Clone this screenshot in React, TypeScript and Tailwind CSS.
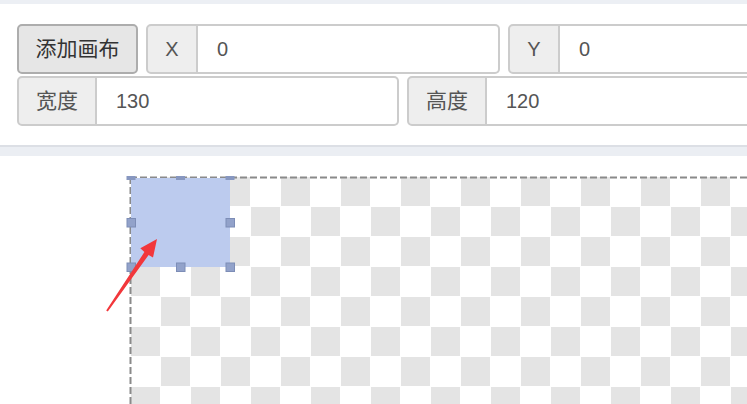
import React from "react";

const FONT = "font-['Liberation_Sans','Noto_Sans_CJK_SC',sans-serif]";

function InputGroup({ label, value, width, labelWidth, cjk }: { label: string; value: string; width: string; labelWidth: string; cjk?: boolean }) {
  return (
    <div className={`flex h-[50px] shrink-0 ${width}`}>
      <div
        className={`flex shrink-0 items-center justify-center rounded-l-[5px] border-2 border-[#cccccc] bg-[#eeeeee] text-[#555555] ${labelWidth} ${cjk ? "text-[21px]" : "text-[20px]"}`}
      >
        {label}
      </div>
      <input
        readOnly
        value={value}
        className="min-w-0 flex-1 rounded-r-[5px] border-2 border-l-0 border-[#cccccc] bg-white pl-[19px] text-[20px] text-[#555555] outline-none"
      />
    </div>
  );
}

// canvas drawing, coordinates are page coordinates shifted by the top bars
const OY = 156;

export default function App() {
  const rect = { x: 131, y: 178 - OY, w: 99, h: 89 };
  const hx = [131, 180.5, 230];
  const hy = [222.5 - OY, 267 - OY];

  return (
    <div className={`h-[404px] w-[747px] overflow-hidden bg-white ${FONT}`}>
      <div className="h-[4px] bg-[#eceff4]" />

      {/* toolbar */}
      <div className="flex flex-col gap-[2px] bg-white pb-[19px] pl-[17px] pt-[20px]">
        <div className="flex gap-2">
          <button className="h-[50px] w-[121px] shrink-0 rounded-[5px] border-2 border-[#adadad] bg-[#e6e6e6] text-[21px] text-[#333333]">
            添加画布
          </button>
          <InputGroup label="X" value="0" width="w-[354px]" labelWidth="w-[52px]" />
          <InputGroup label="Y" value="0" width="w-[354px]" labelWidth="w-[52px]" />
        </div>
        <div className="flex gap-2">
          <InputGroup label="宽度" value="130" width="w-[382px]" labelWidth="w-[80px]" cjk />
          <InputGroup label="高度" value="120" width="w-[382px]" labelWidth="w-[80px]" cjk />
        </div>
      </div>
      <div className="h-[11px] border-t-2 border-[#dcdfe5] bg-[#ebeef3]" />

      {/* canvas */}
      <svg width="747" height={404 - OY} className="block">
        <defs>
          <pattern id="checker" x="131" y={177 - OY} width="60" height="60" patternUnits="userSpaceOnUse">
            <rect x="0" y="0" width="60" height="60" fill="#ffffff" />
            <rect x="30" y="0" width="29" height="29" fill="#e4e4e4" />
            <rect x="0" y="30" width="29" height="29" fill="#e4e4e4" />
          </pattern>
        </defs>
        <rect x="131" y={177 - OY} width="620" height="300" fill="url(#checker)" />
        <line x1="130.5" y1={177 - OY} x2="130.5" y2="404" stroke="#8a8a8a" strokeWidth="2" strokeDasharray="7 3" />
        <line x1="130" y1={177.5 - OY} x2="747" y2={177.5 - OY} stroke="#8a8a8a" strokeWidth="2" strokeDasharray="7 3" />

        <rect x={rect.x} y={rect.y} width={rect.w} height={rect.h} fill="#bccbee" />
        {hx.map((x) => (
          <rect key={`t${x}`} x={x - 4.5} y={176 - OY} width="9" height="4" fill="#8797c0" />
        ))}
        {hy.map((y) =>
          hx
            .filter((x, i) => !(i === 1 && y === hy[0]))
            .map((x) => (
              <rect
                key={`${x}-${y}`}
                x={x - 4}
                y={y - 4}
                width="8.5"
                height="8.5"
                fill="#92a2ca"
                stroke="#7d8db6"
                strokeWidth="1"
              />
            ))
        )}

        {/* annotation arrow */}
        <polygon
          points={[
            [106.2, 310.4],
            [144.4, 252.1],
            [140.3, 248.2],
            [157, 239],
            [153, 257.6],
            [148.6, 254.9],
            [107.8, 311.6],
          ]
            .map(([x, y]) => `${x},${y - OY}`)
            .join(" ")}
          fill="#f2373b"
        />
      </svg>
    </div>
  );
}
